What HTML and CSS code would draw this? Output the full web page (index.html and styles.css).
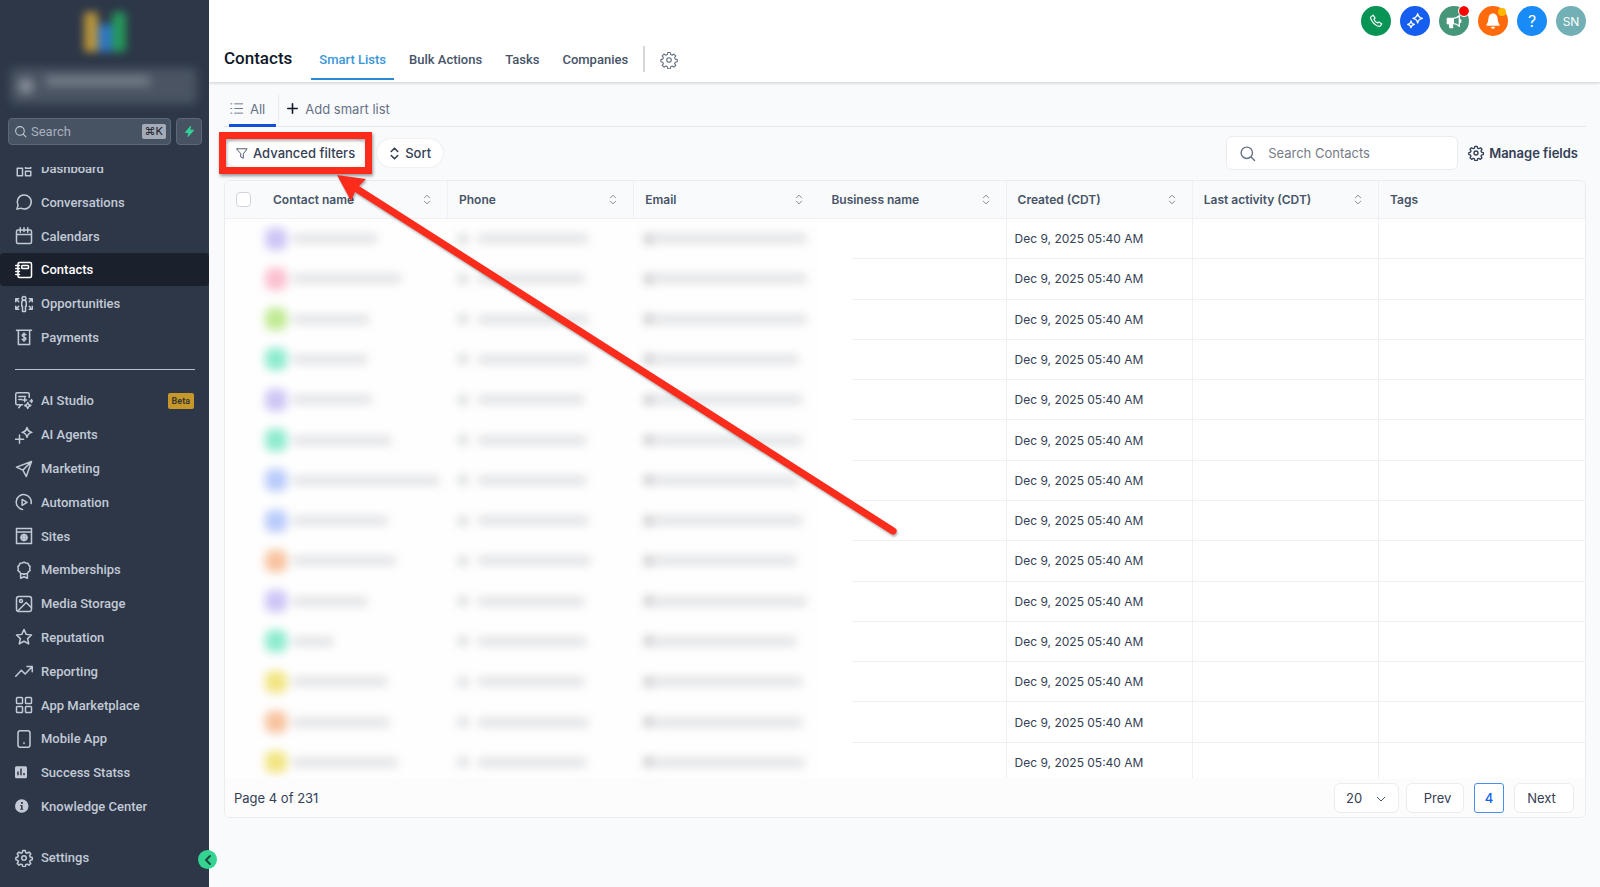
FILE: index.html
```html
<!DOCTYPE html>
<html lang="en">
<head>
    <meta charset="UTF-8">
    <meta name="viewport" content="width=device-width, initial-scale=1.0">
    <title>Contacts</title>
    <link rel="stylesheet" href="styles.css">
</head>
<body>
    <svg class="sprite" aria-hidden="true">
        <symbol id="i-sort" viewBox="0 0 12 16"><path d="M2 5.500l4-4 4 4M2 10.500l4 4 4-4"/></symbol>
        <symbol id="i-gear" viewBox="0 0 24 24"><circle cx="12" cy="12" r="3"/><path d="M10.300 2h3.400l.6 2.800 1.900.8 2.400-1.500 2.400 2.400-1.500 2.400.8 1.900 2.700.6v2.900l-2.700.6-.8 1.900 1.500 2.400-2.400 2.400-2.400-1.500-1.900.8-.6 2.700h-3.400l-.6-2.700-1.900-.8-2.400 1.500L3 19.200l1.500-2.400-.8-1.900L1.200 14.300v-2.900l2.500-.6.8-1.900L3 6.500l2.400-2.400 2.400 1.500 1.900-.8z"/></symbol>
        <symbol id="i-search" viewBox="0 0 24 24"><circle cx="11" cy="11" r="8"/><path d="M17 17l5 5"/></symbol>
    </svg>

    <div class="app">
        <aside class="sidebar">
            <div class="logo"><span class="bar gold"></span><span class="bar blue"></span><span class="bar green"></span></div>
            <div class="account"><span class="account-icon"></span><span class="account-name"></span></div>
            <div class="side-search">
                <label class="search-box">
                    <svg class="icon"><use href="#i-search"/></svg>
                    <input type="text" placeholder="Search" aria-label="Search">
                    <kbd>⌘K</kbd>
                </label>
                <button class="bolt" aria-label="Quick actions">
                    <svg viewBox="0 0 24 24"><path d="M14 1L3 14h7l-1 9 12-14h-8z"/></svg>
                </button>
            </div>
            <nav class="menu">
                <a href="#" class="item first"><svg class="icon" viewBox="0 0 24 24"><path d="M3 3h7v4H3zM14 3h7v8h-7zM3 11h7v10H3zM14 15h7v6h-7z"/></svg>Dashboard</a>
                <a href="#" class="item"><svg class="icon" viewBox="0 0 24 24"><path d="M2.500 21.500l1.600-5.200A9.300 9.300 0 1 1 8 20.200z"/></svg>Conversations</a>
                <a href="#" class="item"><svg class="icon" viewBox="0 0 24 24"><rect x="2" y="4" width="20" height="18" rx="2"/><path d="M2 10h20M7 1v6M12 1v5M17 1v6"/></svg>Calendars</a>
                <a href="#" class="item active"><svg class="icon" viewBox="0 0 24 24"><rect x="4" y="2" width="18" height="20" rx="2"/><rect x="9" y="6" width="9" height="4" rx="1"/><path d="M1 6h5M1 10h5M1 14h5M1 18h5"/></svg>Contacts</a>
                <a href="#" class="item"><svg class="icon" viewBox="0 0 24 24"><circle cx="12" cy="4.500" r="2.500"/><path d="M9 10a3 3 0 0 1 6 0v5h-1v7h-4v-7H9zM1 5h4M1 5v4M1 5l4 4M23 5h-4M23 5v4M23 5l-4 4M1 19h4M1 19v-4M1 19l4-4M23 19h-4M23 19v-4M23 19l-4-4"/></svg>Opportunities</a>
                <a href="#" class="item"><svg class="icon" viewBox="0 0 24 24"><path d="M2 3h20M4.500 3v19h15V3M14.500 9c-1-1.500-5-1.500-5 .8 0 2.700 5 1.700 5 4.400 0 2.300-4 2.300-5 .8M12 6.500v11"/></svg>Payments</a>
                <hr>
                <a href="#" class="item"><svg class="icon" viewBox="0 0 24 24"><path d="M10 17H3a2 2 0 0 1-2-2V3a2 2 0 0 1 2-2h14a2 2 0 0 1 2 2v4M5 6h9M5 10h4M5 21l3-4M13 8v5M10.500 10.500h5M17 14l1.300 2.700L21 18l-2.700 1.300L17 22l-1.300-2.700L13 18l2.700-1.300zM22 10v4M20 12h4"/></svg>AI Studio<span class="beta">Beta</span></a>
                <a href="#" class="item"><svg class="icon" viewBox="0 0 24 24"><path d="M16 2c.8 4 2.500 5.700 6.500 6.500C18.500 9.300 16.800 11 16 15c-.8-4-2.500-5.700-6.500-6.500C13.500 7.700 15.200 6 16 2zM6 12v11M.5 17.500h11"/></svg>AI Agents</a>
                <a href="#" class="item"><svg class="icon" viewBox="0 0 24 24"><path d="M22 2L2 9.500l8.500 4L15 22zM22 2L10.500 13.500"/></svg>Marketing</a>
                <a href="#" class="item"><svg class="icon" viewBox="0 0 24 24"><path d="M10 22A10 10 0 1 1 21.500 14M9.500 8.500l6.500 4-6.500 4z"/></svg>Automation</a>
                <a href="#" class="item"><svg class="icon" viewBox="0 0 24 24"><path d="M2 2h20v20H2zM2 6.500h20"/><circle cx="12" cy="14" r="4"/><path d="M8 14h8M12 10c-2 3-2 5 0 8 2-3 2-5 0-8"/></svg>Sites</a>
                <a href="#" class="item"><svg class="icon" viewBox="0 0 24 24"><path d="M12 1.500l2.500 1.200 2.800.2 1 2.600 1.900 2-.6 2.700.4 2.700-2.200 1.700-1.400 2.300-2.800.1L12 18l-1.600-1-2.800-.1-1.400-2.300L4 12.900l.4-2.700-.6-2.700 1.900-2 1-2.600 2.800-.2zM7.500 17v6l4.500-2 4.500 2v-6"/></svg>Memberships</a>
                <a href="#" class="item"><svg class="icon" viewBox="0 0 24 24"><rect x="2" y="2" width="20" height="20" rx="3"/><circle cx="8" cy="8" r="2"/><path d="M4 21L15 10l7 7"/></svg>Media Storage</a>
                <a href="#" class="item"><svg class="icon" viewBox="0 0 24 24"><path d="M12 2l3 6.500 7 .8-5.200 4.800 1.500 7.100L12 17.700l-6.300 3.500 1.500-7.100L2 9.300l7-.8z"/></svg>Reputation</a>
                <a href="#" class="item"><svg class="icon" viewBox="0 0 24 24"><path d="M1 19l7.500-8 5 5L23 6M16 6h7v7"/></svg>Reporting</a>
                <a href="#" class="item"><svg class="icon" viewBox="0 0 24 24"><rect x="2" y="2" width="8" height="8" rx="1"/><rect x="14" y="2" width="8" height="8" rx="1"/><rect x="2" y="14" width="8" height="8" rx="1"/><rect x="14" y="14" width="8" height="8" rx="1"/></svg>App Marketplace</a>
                <a href="#" class="item"><svg class="icon" viewBox="0 0 24 24"><rect x="4" y="1" width="16" height="22" rx="3"/><path d="M12 17v1"/></svg>Mobile App</a>
                <a href="#" class="item"><svg class="icon solid" viewBox="0 0 24 24"><path d="M2 3h12a2 2 0 0 1 2 2v12a2 2 0 0 1-2 2H2a2 2 0 0 1-2-2V5a2 2 0 0 1 2-2zM3 10v5h2v-5zM7 6v9h2V6zM11 12v3h2v-3z" fill-rule="evenodd"/></svg>Success Statss</a>
                <a href="#" class="item"><svg class="icon solid" viewBox="0 0 24 24"><path d="M9 3a9 9 0 1 1 0 18 9 9 0 0 1 0-18zM8 6.500V9h2.500V6.500zM7 10.500V12h1v3.500H7V17h4v-1.500h-1v-5z" fill-rule="evenodd"/></svg>Knowledge Center</a>
            </nav>
            <a href="#" class="item settings"><svg class="icon"><use href="#i-gear"/></svg>Settings</a>
            <button class="collapse" aria-label="Collapse sidebar"><svg viewBox="0 0 12 12"><path d="M8 2L4 6l4 4"/></svg></button>
        </aside>

        <main class="page">
            <header class="topbar">
                <div class="actions">
                    <button class="round phone" aria-label="Call"><svg viewBox="0 0 24 24"><path d="M3.500 4.500L7 2l3.500 5-2 2.200c1 2.600 3.700 5.300 6.300 6.300l2.200-2 5 3.500-2.500 3.500c-1.500 1.500-5 .5-8.500-2S5 12.500 3.600 9.500 2.500 5.500 3.500 4.500z"/></svg></button>
                    <button class="round spark" aria-label="AI"><svg viewBox="0 0 24 24"><path d="M16 1c.7 4.300 2.700 6.300 7 7-4.300.7-6.300 2.700-7 7-.7-4.300-2.700-6.300-7-7 4.300-.7 6.300-2.700 7-7zM6 12c.5 3.200 1.800 4.500 5 5-3.200.5-4.500 1.800-5 5-.5-3.200-1.800-4.500-5-5 3.200-.5 4.500-1.800 5-5z"/></svg></button>
                    <button class="round news" aria-label="Announcements"><svg viewBox="0 0 24 24"><path class="fill" d="M2 8h9v8H9l1 6H6l-1-6H2z"/><path d="M11 8c4 0 7-2 9-4v16c-2-2-5-4-9-4M22 10v4"/></svg><span class="dot red"></span></button>
                    <button class="round bell" aria-label="Notifications"><svg viewBox="0 0 24 24"><path class="fill" d="M12 1.500c-4.500.8-6 4-6 8 0 4-1 6-3 8.500h18c-2-2.500-3-4.500-3-8.500 0-4-1.500-7.200-6-8zM10 21.500h4c-.5 1.500-3.500 1.500-4 0z"/></svg><span class="dot amber"></span></button>
                    <button class="round help" aria-label="Help">?</button>
                    <button class="round user">SN</button>
                </div>
                <div class="tabs">
                    <h1>Contacts</h1>
                    <a href="#" class="tab current">Smart Lists</a>
                    <a href="#" class="tab">Bulk Actions</a>
                    <a href="#" class="tab">Tasks</a>
                    <a href="#" class="tab">Companies</a>
                    <span class="split"></span>
                    <button class="tab-gear" aria-label="Settings"><svg><use href="#i-gear"/></svg></button>
                </div>
            </header>

            <section class="content">
                <div class="lists">
                    <a href="#" class="list on"><svg viewBox="0 0 14 14"><path d="M1 2h1M1 7h1M1 12h1M5 2h9M5 7h9M5 12h9"/></svg>All</a>
                    <button class="list add"><svg viewBox="0 0 14 14"><path d="M7 1v12M1 7h12"/></svg>Add smart list</button>
                </div>

                <div class="toolbar">
                    <div class="callout">
                        <button class="pill"><svg viewBox="0 0 14 14"><path d="M1 1.500h12L8.500 7.500v5l-3-1.500V7.500z"/></svg>Advanced filters</button>
                        <span class="frame"></span>
                        <svg class="arrow" viewBox="0 0 570 370"><path d="M2 2L31 6l-7 7L560 355a3 3 0 0 1-4 6L20 19l-4 9z"/></svg>
                    </div>
                    <button class="pill sort"><svg><use href="#i-sort"/></svg>Sort</button>
                    <label class="find">
                        <svg><use href="#i-search"/></svg>
                        <input type="text" placeholder="Search Contacts" aria-label="Search Contacts">
                    </label>
                    <button class="manage"><svg><use href="#i-gear"/></svg>Manage fields</button>
                </div>

                <div class="panel">
                    <div class="table-wrap">
                        <table>
                            <thead>
                                <tr>
                                    <th><div class="head"><input type="checkbox" aria-label="Select all">Contact name<svg><use href="#i-sort"/></svg></div></th>
                                    <th><div class="head">Phone<svg><use href="#i-sort"/></svg></div></th>
                                    <th class="open"><div class="head">Email<svg><use href="#i-sort"/></svg></div></th>
                                    <th><div class="head">Business name<svg><use href="#i-sort"/></svg></div></th>
                                    <th><div class="head">Created (CDT)<svg><use href="#i-sort"/></svg></div></th>
                                    <th><div class="head">Last activity (CDT)<svg><use href="#i-sort"/></svg></div></th>
                                    <th class="tags"><div class="head">Tags</div></th>
                                </tr>
                            </thead>
                            <tbody id="rows"></tbody>
                        </table>
                    </div>
                    <footer class="pager">
                        <span class="count">Page 4 of 231</span>
                        <select aria-label="Rows per page"><option>20</option></select>
                        <button class="prev">Prev</button>
                        <button class="num">4</button>
                        <button class="next">Next</button>
                    </footer>
                </div>
            </section>
        </main>
    </div>

    <script>
        // avatar colour, name width, phone width, email width
        const contacts = [
            ["violet", 84, 110, 150], ["pink", 108, 106, 150], ["lime", 76, 110, 150],
            ["mint", 74, 110, 142], ["violet", 78, 106, 146], ["mint", 98, 108, 146],
            ["blue", 146, 108, 142], ["blue", 94, 110, 146], ["orange", 102, 112, 140],
            ["violet", 74, 106, 150], ["mint", 40, 108, 140], ["yellow", 94, 106, 146],
            ["orange", 96, 110, 146], ["yellow", 104, 108, 148]
        ];

        document.getElementById("rows").innerHTML = contacts.map(([color, name, phone, email]) => `
            <tr>
                <td class="hidden"><div class="smudge who"><i class="avatar ${color}"></i><i class="line" style="width:${name}px"></i></div></td>
                <td class="hidden"><div class="smudge"><i class="glyph"></i><i class="line" style="width:${phone}px"></i></div></td>
                <td class="hidden open"><div class="smudge mail"><i class="glyph"></i><i class="line" style="width:${email}px"></i></div></td>
                <td class="faded"></td>
                <td>Dec 9, 2025 05:40 AM</td>
                <td></td>
                <td></td>
            </tr>`).join("");
    </script>
</body>
</html>
```
FILE: styles.css
```css
* {
    box-sizing: border-box;
}
body {
    margin: 0;
    font-family: Inter, sans-serif;
    font-size: 13px;
    color: #344054;
    background: #f9fafc;
}
button, input, select {
    font: inherit;
    color: inherit;
    border: 0;
    margin: 0;
    padding: 0;
    background: none;
}
a {
    color: inherit;
    text-decoration: none;
}
svg {
    fill: none;
    stroke: currentColor;
    stroke-width: 2;
    stroke-linecap: round;
    stroke-linejoin: round;
    flex: none;
}
.sprite {
    position: absolute;
    width: 0;
    height: 0;
}
.app {
    display: flex;
    height: 100vh;
}

/* sidebar */
.sidebar {
    position: relative;
    z-index: 1;
    flex: none;
    width: 209px;
    display: flex;
    flex-direction: column;
    background: #2d3748;
    color: #c3cad6;
    font-family: Roboto, sans-serif;
    font-size: 13px;
    font-weight: 500;
    padding-bottom: 13px;
}
.logo {
    display: flex;
    justify-content: center;
    align-items: flex-end;
    height: 52px;
    filter: blur(4px);
}
.bar {
    width: 14px;
    height: 40px;
    border-radius: 3px;
}
.gold {
    background: #b8943a;
}
.blue {
    height: 28px;
    background: #2f74c4;
}
.green {
    background: #24985a;
}
.account {
    display: flex;
    align-items: center;
    gap: 12px;
    height: 36px;
    margin: 16px 12px 14px 10px;
    padding: 0 8px;
    border-radius: 6px;
    background: #4a5462;
    filter: blur(5px);
}
.account-icon {
    width: 16px;
    height: 16px;
    border-radius: 50%;
    background: #858c97;
}
.account-name {
    width: 104px;
    height: 10px;
    margin-bottom: 10px;
    background: #747c88;
}
.side-search {
    display: flex;
    gap: 5px;
    padding: 0 7px 0 8px;
}
.search-box {
    flex: 1;
    min-width: 0;
    display: flex;
    align-items: center;
    height: 27px;
    padding: 0 4px 0 5px;
    border: 1px solid #5d6778;
    border-radius: 4px;
    background: #475262;
}
.search-box .icon {
    width: 13px;
    height: 13px;
    margin-right: 4px;
}
.search-box input {
    flex: 1;
    min-width: 0;
    font-weight: 400;
    outline: 0;
}
.search-box input::placeholder {
    color: #a9b1be;
    opacity: 1;
}
kbd {
    padding: 0 3px;
    border-radius: 2px;
    font: 11px/15px Inter, "DejaVu Sans", sans-serif;
    color: #1a202c;
    background: #a3abb8;
}
.bolt {
    width: 26px;
    border: 1px solid #5d6778;
    border-radius: 4px;
    background: #475262;
    display: grid;
    place-items: center;
}
.bolt svg {
    width: 11px;
    height: 11px;
    fill: #34d399;
    stroke: #34d399;
}
.menu {
    flex: 1;
    min-height: 0;
    display: flex;
    flex-direction: column;
    justify-content: space-between;
    margin-top: 22px;
    overflow: hidden;
}
.item {
    flex: none;
    display: flex;
    align-items: center;
    gap: 8px;
    height: 33px;
    padding: 0 15px;
    border-radius: 4px;
}
.item .icon {
    width: 18px;
    height: 18px;
}
.item.first {
    margin-top: -15px;
}
.item.active {
    color: #fff;
    background: #1a202c;
}
.solid {
    fill: currentColor;
    stroke: none;
}
.menu hr {
    width: 180px;
    margin: 14px 15px;
    border: 0;
    border-top: 1px solid #b7c0cd;
}
.beta {
    margin-left: auto;
    padding: 0 4px;
    border-radius: 2px;
    font-size: 9px;
    line-height: 16px;
    font-weight: 700;
    color: #3d3a2c;
    background: #c6982b;
}
.settings {
    margin-top: 18px;
}
.collapse {
    position: absolute;
    right: -8px;
    bottom: 18px;
    width: 19px;
    height: 19px;
    border-radius: 50%;
    background: #33d391;
    color: #1a4a3a;
    display: grid;
    place-items: center;
}
.collapse svg {
    width: 12px;
    height: 12px;
}

/* top bar */
.page {
    flex: 1;
    min-width: 0;
    display: flex;
    flex-direction: column;
}
.topbar {
    height: 82px;
    padding: 6px 14px 0 15px;
    background: #fff;
    box-shadow: 0 1px 3px rgba(16, 24, 40, .2);
}
.actions {
    display: flex;
    justify-content: flex-end;
    gap: 9px;
    height: 30px;
}
.round {
    position: relative;
    width: 30px;
    height: 30px;
    border-radius: 50%;
    color: #fff;
    display: grid;
    place-items: center;
}
.round svg {
    width: 16px;
    height: 16px;
}
.round .fill {
    fill: #fff;
}
.phone {
    background: #079455;
}
.phone svg {
    width: 14px;
    height: 14px;
}
.spark {
    background: #155eef;
}
.news {
    background: #46967a;
}
.bell {
    background: #ff6a0c;
}
.help {
    font-size: 16px;
    background: #188bf6;
}
.user {
    background: #72b0b6;
    font-size: 12px;
}
.dot {
    position: absolute;
    top: 0;
    right: 0;
    width: 10px;
    height: 10px;
    border-radius: 50%;
}
.red {
    background: #ff0000;
    outline: 1px solid #fff;
}
.amber {
    width: 8px;
    height: 8px;
    top: 2px;
    right: 2px;
    background: #ffb800;
}
.tabs {
    display: flex;
    align-items: center;
    height: 44px;
    font-family: Roboto, sans-serif;
    font-weight: 500;
}
h1 {
    margin: 0 19px 0 0;
    font: 500 17px/24px Roboto, sans-serif;
    color: #101828;
}
.tab {
    height: 44px;
    margin-right: 7px;
    padding: 0 8px;
    line-height: 47px;
    color: #475467;
}
.tab.current {
    border-bottom: 2px solid #2a8bd0;
    color: #3a96d8;
}
.split {
    width: 2px;
    height: 26px;
    margin: 2px 15px 0 0;
    background: #d5d7db;
}
.tab-gear {
    height: 18px;
    margin-top: 4px;
    color: #667085;
}
.tab-gear svg {
    width: 18px;
    height: 18px;
    stroke-width: 1.5;
}

/* content */
.content {
    flex: 1;
    min-height: 0;
    display: flex;
    flex-direction: column;
    padding: 12px 14px 69px 15px;
}
.lists {
    display: flex;
    height: 33px;
    border-bottom: 1px solid #e4e7ec;
    color: #667085;
}
.list {
    display: flex;
    align-items: center;
    gap: 7px;
    height: 33px;
    padding-bottom: 4px;
}
.list.on {
    margin-left: 5px;
    padding: 0 11px 1px 1px;
    border-bottom: 3px solid #1150d8;
}
.list.on svg {
    width: 13px;
    height: 13px;
    stroke-width: 1;
}
.list.add {
    margin-left: 2px;
    padding-left: 8px;
    border-left: 1px solid #eaecf0;
}
.list.add svg {
    width: 11px;
    height: 11px;
    color: #101828;
}
.toolbar {
    display: flex;
    align-items: center;
    gap: 10px;
    height: 53px;
    padding: 0 8px 1px 0;
    font-weight: 500;
}
.callout {
    position: relative;
    z-index: 2;
}
.pill {
    display: flex;
    align-items: center;
    gap: 5px;
    height: 28px;
    padding: 0 12px;
    border-radius: 14px;
    background: #fff;
    box-shadow: 0 0 2px rgba(16, 24, 40, .14);
}
.pill svg {
    width: 12px;
    height: 13px;
    stroke-width: 1;
}
.pill.sort svg {
    width: 11px;
    stroke-width: 2;
}
.frame {
    position: absolute;
    inset: -7px -5px;
    border: 7px solid #fb2c1c;
    box-shadow: 1px 2px 3px rgba(0, 0, 0, .4), inset 1px 2px 3px rgba(0, 0, 0, .3);
    pointer-events: none;
}
.arrow {
    position: absolute;
    left: 111px;
    top: 34px;
    width: 570px;
    height: 370px;
    fill: #fb2c1c;
    stroke: none;
    filter: drop-shadow(1px 2px 1px rgba(0, 0, 0, .3));
    pointer-events: none;
}
.find {
    display: flex;
    align-items: center;
    gap: 12px;
    width: 232px;
    height: 34px;
    margin-left: auto;
    padding: 0 12px;
    border: 1px solid #eaecf0;
    border-radius: 6px;
    background: #fff;
}
.find svg {
    width: 17px;
    height: 17px;
    color: #667085;
}
.find input {
    flex: 1;
    min-width: 0;
    font-weight: 400;
    outline: 0;
}
.find input::placeholder {
    color: #757b87;
    opacity: 1;
}
.manage {
    display: flex;
    align-items: center;
    gap: 5px;
    font-weight: 600;
}
.manage svg {
    width: 16px;
    height: 16px;
}

/* table */
.panel {
    flex: 1;
    min-height: 0;
    display: flex;
    flex-direction: column;
    border: 1px solid #eaecf0;
    border-radius: 6px;
    background: #fff;
    overflow: hidden;
}
.table-wrap {
    flex: 1;
    min-height: 0;
    overflow: hidden;
}
table {
    width: 100%;
    height: calc(100% + 5px);
    table-layout: fixed;
    border-spacing: 0;
}
th, td {
    padding: 0 8px;
    border-right: 1px solid #eef0f3;
    border-bottom: 1px solid #eef0f3;
    text-align: left;
}
th {
    height: 38px;
    padding: 0 16px 0 11px;
    font-size: 12px;
    font-weight: 600;
    color: #475467;
    background: #f9fafc;
}
th:first-child {
    width: 223px;
}
.tags {
    width: 206px;
}
th:last-child, td:last-child {
    border-right: 0;
}
.open {
    border-right-color: transparent;
}
.head {
    display: flex;
    align-items: center;
}
.head svg {
    width: 8px;
    height: 11px;
    margin-left: auto;
    stroke-width: 1;
}
.head input {
    appearance: none;
    width: 15px;
    height: 15px;
    margin-right: 22px;
    border: 1px solid #d0d5dd;
    border-radius: 4px;
    background: #fff;
}
td {
    font-size: 12px;
}
.hidden {
    border-color: transparent;
    background: #fefefe;
}
.faded {
    border-bottom-color: transparent;
    background: linear-gradient(#eef0f3, #eef0f3) 32px 100% / 100% 1px no-repeat border-box;
}
.smudge {
    display: flex;
    align-items: center;
    gap: 10px;
    height: 24px;
    padding-left: 2px;
    filter: blur(5px);
}
.smudge.who {
    padding-left: 32px;
    gap: 6px;
}
.avatar {
    flex: none;
    width: 22px;
    height: 22px;
    border-radius: 7px;
}
.glyph {
    width: 10px;
    height: 10px;
    background: #dcdde0;
}
.line {
    height: 9px;
    background: #e0e1e4;
}
.mail {
    gap: 2px;
}
.mail .glyph {
    background: #c8c9cc;
}
.violet {
    background: #cdc6f5;
}
.pink {
    background: #fbc0cf;
}
.lime {
    background: #c0ea93;
}
.mint {
    background: #8eebcf;
}
.blue.avatar {
    height: 22px;
    background: #b9cbfb;
}
.orange {
    background: #f8c3a0;
}
.yellow {
    background: #f2e583;
}

/* pager */
.pager {
    flex: none;
    display: flex;
    align-items: center;
    height: 39px;
    padding: 0 11px 0 9px;
    background: #fcfcfd;
}
.count {
    margin-right: auto;
}
.pager select, .pager button {
    height: 30px;
    border: 1px solid #eaecf0;
    border-radius: 6px;
    background-color: #fff;
}
.pager select {
    appearance: none;
    width: 65px;
    padding-left: 11px;
    background-image: url("data:image/svg+xml,%3Csvg xmlns='http://www.w3.org/2000/svg' width='10' height='6' fill='none' stroke='%23475467'%3E%3Cpath d='M1 1l4 4 4-4'/%3E%3C/svg%3E");
    background-repeat: no-repeat;
    background-position: 41px 12px;
}
.pager .prev {
    width: 58px;
    margin-left: 7px;
    padding-left: 5px;
}
.pager .num {
    width: 30px;
    margin: 0 10px;
    border-color: #4a8df0;
    border-radius: 3px;
    color: #155eef;
    font-weight: 500;
}
.pager .next {
    width: 60px;
    padding-right: 5px;
}
```
